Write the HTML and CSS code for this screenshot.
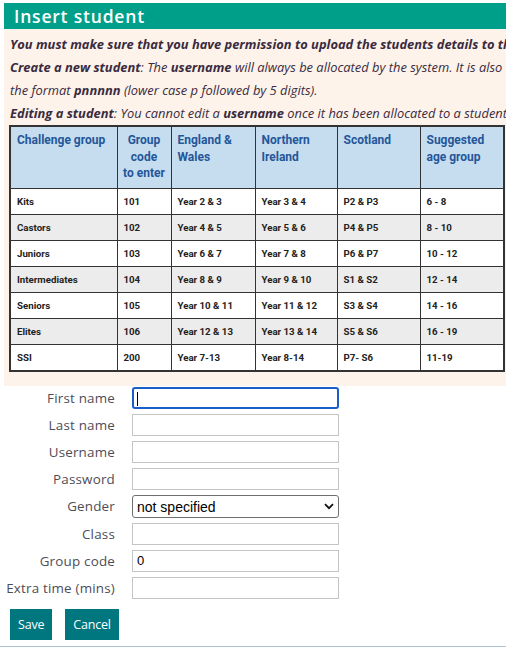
FILE: index.html
```html
<!DOCTYPE html>
<html lang="en">
<head>
<meta charset="utf-8">
<title>Insert student</title>
<link rel="stylesheet" href="styles.css">
</head>
<body>
<div class="page">
  <h1 class="title">Insert student</h1>
  <div class="info">
    <p class="line"><b>You must make sure that you have permission to upload the students details to this system.</b></p>
    <p class="line"><b>Create a new student</b>: The <b>username</b> will always be allocated by the system. It is also<br>the format <b>pnnnnn</b> (lower case p followed by 5 digits).</p>
    <p class="line"><b>Editing a student</b>: You cannot edit a <b>username</b> once it has been allocated to a student.</p>
    <table class="groups">
      <colgroup>
        <col class="c1"><col class="c2"><col class="c3"><col class="c4"><col class="c5"><col class="c6">
      </colgroup>
      <thead>
        <tr>
          <th>Challenge group</th>
          <th class="center">Group<br>code<br>to enter</th>
          <th>England &amp; Wales</th>
          <th>Northern Ireland</th>
          <th>Scotland</th>
          <th>Suggested age group</th>
        </tr>
      </thead>
      <tbody>
        <tr><td>Kits</td><td>101</td><td>Year 2 &amp; 3</td><td>Year 3 &amp; 4</td><td>P2 &amp; P3</td><td>6 - 8</td></tr>
        <tr><td>Castors</td><td>102</td><td>Year 4 &amp; 5</td><td>Year 5 &amp; 6</td><td>P4 &amp; P5</td><td>8 - 10</td></tr>
        <tr><td>Juniors</td><td>103</td><td>Year 6 &amp; 7</td><td>Year 7 &amp; 8</td><td>P6 &amp; P7</td><td>10 - 12</td></tr>
        <tr><td>Intermediates</td><td>104</td><td>Year 8 &amp; 9</td><td>Year 9 &amp; 10</td><td>S1 &amp; S2</td><td>12 - 14</td></tr>
        <tr><td>Seniors</td><td>105</td><td>Year 10 &amp; 11</td><td>Year 11 &amp; 12</td><td>S3 &amp; S4</td><td>14 - 16</td></tr>
        <tr><td>Elites</td><td>106</td><td>Year 12 &amp; 13</td><td>Year 13 &amp; 14</td><td>S5 &amp; S6</td><td>16 - 19</td></tr>
        <tr><td>SSI</td><td>200</td><td>Year 7-13</td><td>Year 8-14</td><td>P7- S6</td><td>11-19</td></tr>
      </tbody>
    </table>
  </div>
  <form class="form">
    <label class="lbl" for="fn">First name</label>
    <input class="field focused" id="fn" type="text">
    <label class="lbl" for="ln">Last name</label>
    <input class="field" id="ln" type="text">
    <label class="lbl" for="un">Username</label>
    <input class="field" id="un" type="text">
    <label class="lbl" for="pw">Password</label>
    <input class="field" id="pw" type="password">
    <label class="lbl" for="gd">Gender</label>
    <div class="select-wrap">
      <select class="select" id="gd">
        <option>not specified</option>
        <option>male</option>
        <option>female</option>
      </select>
      <svg class="chevron" width="10" height="7" viewBox="0 0 10 7"><path d="M1 1.2 L5 5.2 L9 1.2" fill="none" stroke="#111" stroke-width="1.8"/></svg>
    </div>
    <label class="lbl" for="cl">Class</label>
    <input class="field" id="cl" type="text">
    <label class="lbl" for="gc">Group code</label>
    <input class="field" id="gc" type="text" value="0">
    <label class="lbl" for="et">Extra time (mins)</label>
    <input class="field" id="et" type="text">
    <div class="buttons">
      <button type="button" class="btn">Save</button>
      <button type="button" class="btn">Cancel</button>
    </div>
  </form>
  <div class="rule"></div>
</div>
</body>
</html>
```
FILE: styles.css
```css
html, body {
  margin: 0;
  padding: 0;
  background: #ffffff;
  overflow: hidden;
}
.page {
  width: 506px;
  height: 649px;
  overflow: hidden;
  padding-top: 3px;
  box-sizing: border-box;
  font-family: "Open Sans", "DejaVu Sans", sans-serif;
}
.title {
  margin: 0 0 0 4px;
  height: 26px;
  background: #009f8a;
  color: #ffffff;
  font-size: 17.5px;
  font-weight: 600;
  line-height: 27px;
  letter-spacing: 0.8px;
  padding-left: 10px;
}
.info {
  margin-left: 4px;
  background: #fdf3eb;
  padding: 4px 0 14px 0;
}
.line {
  margin: 0;
  padding-left: 6px;
  white-space: nowrap;
  font-style: italic;
  font-size: 12.9px;
  line-height: 23px;
  color: #3a2b3e;
}
.line b {
  font-weight: 700;
}
.groups {
  margin: 0 0 0 5px;
  width: 494px;
  border-collapse: collapse;
  border: 2px solid #333333;
  font-family: Roboto, "Liberation Sans", sans-serif;
  table-layout: fixed;
}
.c1 { width: 107px; }
.c2 { width: 54px; }
.c3 { width: 84px; }
.c4 { width: 82px; }
.c5 { width: 83px; }
.c6 { width: 84px; }
.groups th {
  background: #c6ddef;
  color: #24569a;
  font-size: 12px;
  font-weight: 700;
  text-align: left;
  vertical-align: top;
  line-height: 16.5px;
  padding: 5px 6px 6px 6px;
  height: 49px;
  border: 1px solid #333333;
}
.groups th.center {
  text-align: center;
  white-space: nowrap;
  padding-left: 2px;
  padding-right: 2px;
}
.groups td {
  font-size: 9.7px;
  font-weight: 700;
  color: #222222;
  height: 25px;
  padding: 0 6px;
  border: 1px solid #333333;
  background: #ffffff;
}
.groups tbody tr:nth-child(even) td {
  background: #ececec;
}
.form {
  display: grid;
  grid-template-columns: 115px 207px;
  column-gap: 17px;
  row-gap: 5px;
  margin-top: 1px;
  align-items: center;
}
.lbl {
  text-align: right;
  font-size: 13.4px;
  color: #4d4d57;
  letter-spacing: 0.2px;
}
.field {
  box-sizing: border-box;
  height: 22px;
  width: 207px;
  margin: 0;
  border: 1px solid #c4c4c4;
  border-radius: 0;
  padding: 0 4px;
  font-family: "Liberation Sans", Arial, sans-serif;
  font-size: 13px;
  color: #000000;
  background: #ffffff;
  outline: none;
}
.field.focused {
  border: 2px solid #1a5fc9;
  border-radius: 3px;
  background: linear-gradient(#000000, #000000) no-repeat 3px 3px / 1px 14px, #ffffff;
}
.select-wrap {
  position: relative;
  width: 207px;
  height: 23px;
}
.select {
  appearance: none;
  -webkit-appearance: none;
  box-sizing: border-box;
  width: 207px;
  height: 23px;
  margin: 0;
  border: 1px solid #6f6f6f;
  border-radius: 3px;
  background: #ffffff;
  padding: 0 4px;
  font-family: "Liberation Sans", Arial, sans-serif;
  font-size: 14px;
  color: #000000;
}
.chevron {
  position: absolute;
  right: 5px;
  top: 8px;
  pointer-events: none;
}
.buttons {
  grid-column: 1 / 3;
  display: flex;
  gap: 13px;
  padding-left: 10px;
  margin-top: 5px;
}
.btn {
  height: 31px;
  border: none;
  border-radius: 0;
  background: #00777f;
  color: #ffffff;
  font-family: "Open Sans", "DejaVu Sans", sans-serif;
  font-size: 12.5px;
  padding: 0 8px;
  letter-spacing: -0.2px;
}
.rule {
  margin-top: 6px;
  height: 1px;
  background: #a9c2cf;
}
```
